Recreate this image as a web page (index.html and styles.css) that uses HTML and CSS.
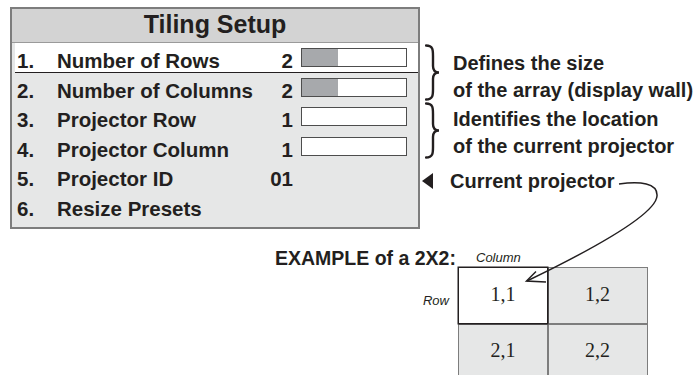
FILE: index.html
```html
<!DOCTYPE html>
<html lang="en">
<head>
  <meta charset="UTF-8" />
  <meta name="viewport" content="width=device-width, initial-scale=1.0" />
  <title>Tiling Setup</title>
  <link rel="stylesheet" href="styles.css">
</head>
<body>

  <div class="sheet">
    <div class="top">
      <div class="menu">
        <div class="menu-title">Tiling Setup</div>
        <div class="menu-row active">
          <span class="num">1.</span><span class="label">Number of Rows</span><span class="val">2</span>
          <span class="bar"><span class="fill" style="width: 35%"></span></span>
        </div>
        <div class="menu-row">
          <span class="num">2.</span><span class="label">Number of Columns</span><span class="val">2</span>
          <span class="bar"><span class="fill" style="width: 35%"></span></span>
        </div>
        <div class="menu-row">
          <span class="num">3.</span><span class="label">Projector Row</span><span class="val">1</span>
          <span class="bar"></span>
        </div>
        <div class="menu-row">
          <span class="num">4.</span><span class="label">Projector Column</span><span class="val">1</span>
          <span class="bar"></span>
        </div>
        <div class="menu-row">
          <span class="num">5.</span><span class="label">Projector ID</span><span class="val">01</span>
          <span class="bar empty"></span>
        </div>
        <div class="menu-row">
          <span class="num">6.</span><span class="label">Resize Presets</span>
        </div>
      </div>

      <div class="notes">
        <div class="note-group">
          <svg class="brace" width="16" height="57" viewBox="0 0 16 57">
            <path d="M1,1.5 C8,1.5 8,6 8,12 L8,22 C8,26 9.5,28.5 14,28.5 C9.5,28.5 8,31 8,35 L8,45 C8,51 8,55.5 1,55.5" />
          </svg>
          <div class="note-text">Defines the size<br>of the array (display wall)</div>
        </div>
        <div class="note-group second">
          <svg class="brace" width="16" height="57" viewBox="0 0 16 57">
            <path d="M1,1.5 C8,1.5 8,6 8,12 L8,22 C8,26 9.5,28.5 14,28.5 C9.5,28.5 8,31 8,35 L8,45 C8,51 8,55.5 1,55.5" />
          </svg>
          <div class="note-text">Identifies the location<br>of the current projector</div>
        </div>
        <div class="pointer">
          <span class="tri"></span>
          <span class="pointer-text">Current projector</span>
        </div>
      </div>
    </div>

    <div class="example">
      <div class="example-label">EXAMPLE of a 2X2:</div>
      <div class="col-label">Column</div>
      <div class="row-label">Row</div>
      <div class="cells">
        <div class="cell current">1,1</div>
        <div class="cell">1,2</div>
        <div class="cell">2,1</div>
        <div class="cell">2,2</div>
      </div>
    </div>

    <!-- callout line from "Current projector" to cell 1,1 -->
    <svg class="callout" width="696" height="375" viewBox="0 0 696 375">
      <path d="M619,184 C640,181 658,183 657,196 C656,210 620,236 527,281" />
      <path d="M536,271.5 L526.5,281 L546,282" />
    </svg>
  </div>

</body>
</html>
```

FILE: styles.css
```css
body {
  margin: 0;
  background: #fff;
  color: #231f20;
  font-family: 'Liberation Sans', Arial, sans-serif;
}

.sheet {
  position: relative;
  width: 696px;
  height: 375px;
  overflow: hidden;
  padding: 7px 0 0 10px;
  box-sizing: border-box;
}

.top {
  display: flex;
  align-items: flex-start;
}

/* on-screen menu */
.menu {
  width: 410px;
  height: 222px;
  box-sizing: border-box;
  border: 2px solid #7d7d7d;
  background: #e6e7e7;
}

.menu-title {
  background: #d3d3d3;
  border-bottom: 1px solid #9a9a9a;
  height: 34px;
  box-sizing: border-box;
  padding-bottom: 3px;
  line-height: 31px;
  text-align: center;
  font-size: 25px;
  font-weight: bold;
}

.menu-row {
  display: flex;
  align-items: flex-start;
  height: 29.5px;
  box-sizing: border-box;
  padding: 7px 11px 0 5px;
  font-size: 20.5px;
  font-weight: bold;
  line-height: 22.5px;
}

.menu-row.active {
  background: #fff;
  border-bottom: 1.5px solid #231f20;
  margin-left: 3px;
  padding-left: 2px;
}

.num {
  width: 40px;
  flex: none;
}

.label {
  flex: 1;
  white-space: nowrap;
}

.val {
  width: 40px;
  text-align: right;
}

.bar {
  flex: none;
  width: 106px;
  height: 19px;
  box-sizing: border-box;
  margin: -2px 0 0 8px;
  border: 1px solid #4d4d4d;
  background: #fff;
}

.bar.empty {
  visibility: hidden;
}

.fill {
  display: block;
  height: 100%;
  background: #a7a9ac;
}

/* annotations on the right */
.notes {
  margin-top: 37px;
  font-size: 20px;
  font-weight: bold;
}

.note-group {
  display: flex;
  height: 58px;
  padding-left: 5px;
}

.brace {
  flex: none;
}

.brace path {
  fill: none;
  stroke: #231f20;
  stroke-width: 2.4;
  stroke-linecap: round;
}

.note-text {
  margin-left: 12px;
  padding-top: 6px;
  line-height: 27px;
  white-space: nowrap;
}

.note-group.second .note-text {
  padding-top: 4px;
}

.pointer {
  display: flex;
  align-items: center;
  margin: 11px 0 0 2px;
  line-height: 20px;
}

.tri {
  width: 0;
  height: 0;
  border-top: 8.5px solid transparent;
  border-bottom: 8.5px solid transparent;
  border-right: 11px solid #231f20;
  margin-right: 17px;
}

/* 2x2 example */
.example {
  display: grid;
  grid-template-columns: 183px 190px;
  grid-template-rows: 19px auto;
  margin: 19px 0 0 265px;
}

.example-label {
  font-size: 19.5px;
  font-weight: bold;
  line-height: 20px;
  white-space: nowrap;
}

.col-label {
  align-self: end;
  padding-left: 18px;
  margin-bottom: 1px;
  font-size: 13px;
  font-style: italic;
  line-height: 16px;
}

.row-label {
  text-align: right;
  padding: 26px 9px 0 0;
  font-size: 13px;
  font-style: italic;
  line-height: 16px;
}

.cells {
  display: grid;
  grid-template-columns: 88px 98px;
  grid-template-rows: 55px 55px;
  gap: 1.5px;
  background: #7d7d7d;
  border: 1px solid #7d7d7d;
  border-bottom: none;
}

.cell {
  display: flex;
  align-items: center;
  justify-content: center;
  padding-bottom: 3px;
  background: #e6e7e7;
  font-family: 'Liberation Serif', 'Times New Roman', serif;
  font-size: 20px;
}

.cell.current {
  background: #fff;
  box-shadow: 0 0 0 1.5px #231f20;
  position: relative;
}

.callout {
  position: absolute;
  left: 0;
  top: 0;
  pointer-events: none;
}

.callout path {
  fill: none;
  stroke: #231f20;
  stroke-width: 1.5;
}
```
